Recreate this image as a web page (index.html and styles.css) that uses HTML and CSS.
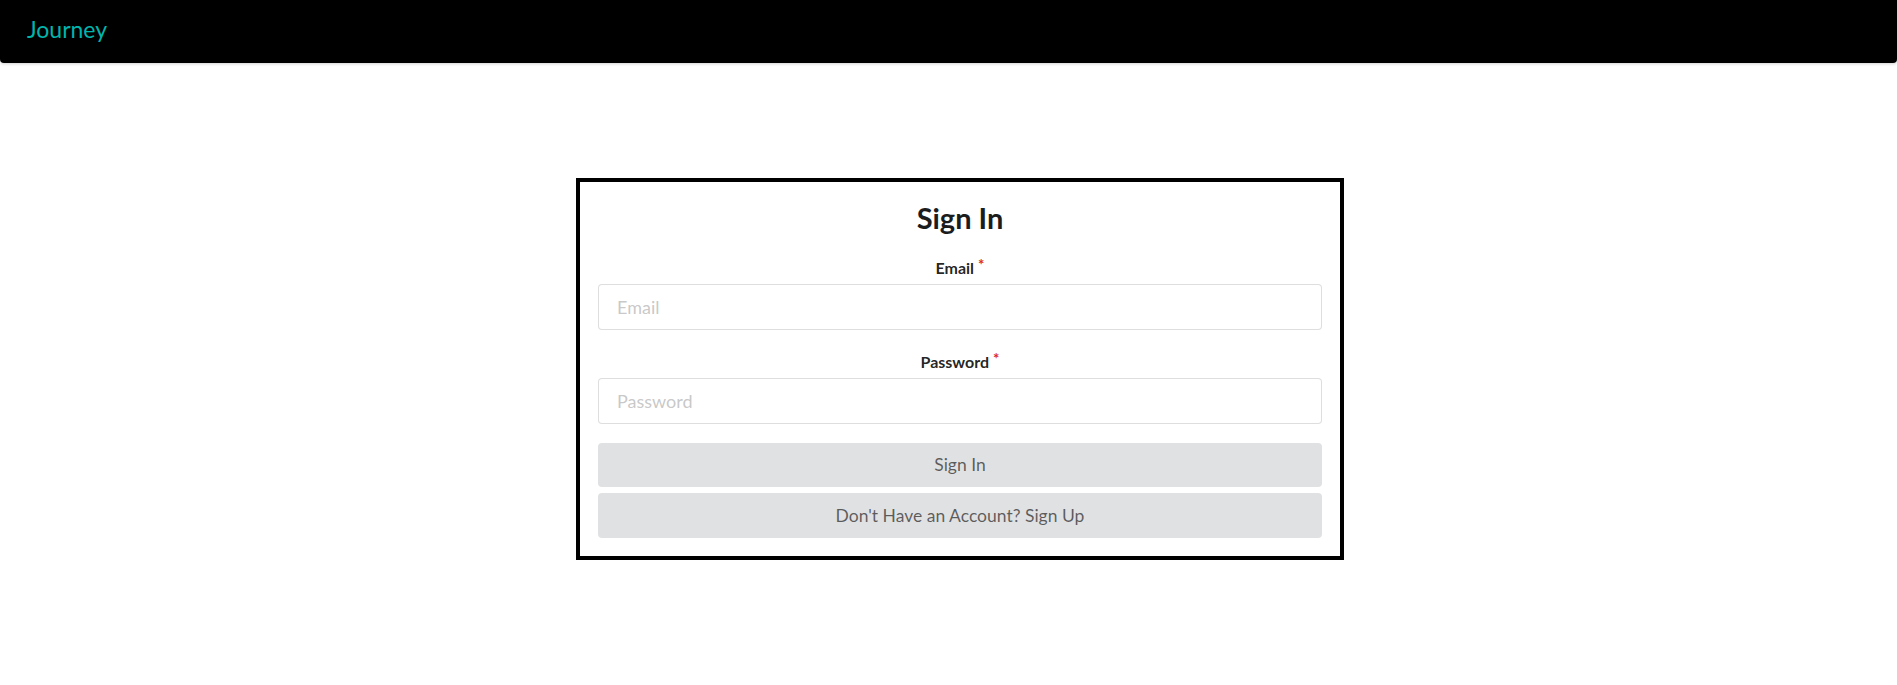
FILE: index.html
```html
<!DOCTYPE html>
<html lang="en">
<head>
<meta charset="utf-8">
<title>Journey</title>
<link rel="stylesheet" href="styles.css">
</head>
<body>
<header class="topbar">
  <a class="brand" href="#">Journey</a>
</header>
<main class="page">
  <form class="card">
    <h1 class="title">Sign In</h1>
    <div class="field">
      <label class="label" for="email">Email<span class="req">*</span></label>
      <input class="input" id="email" type="email" placeholder="Email">
    </div>
    <div class="field">
      <label class="label" for="password">Password<span class="req">*</span></label>
      <input class="input" id="password" type="password" placeholder="Password">
    </div>
    <div class="actions">
      <button class="btn" type="button">Sign In</button>
      <button class="btn" type="button">Don't Have an Account? Sign Up</button>
    </div>
  </form>
</main>
</body>
</html>
```
FILE: styles.css
```css
* { box-sizing: border-box; }
html, body { margin: 0; padding: 0; background: #fff; }
body { font-family: Lato, "Open Sans", "Liberation Sans", sans-serif; color: rgba(0,0,0,.87); }

.topbar {
  height: 63px;
  background: #000;
  border-radius: 0 0 4px 4px;
  box-shadow: 0 1px 3px 0 rgba(34,36,38,.2);
  display: flex;
  align-items: flex-start;
  padding: 16px 0 0 27px;
}
.brand {
  font-size: 23px;
  line-height: 1.2;
  color: #00b5ad;
  text-decoration: none;
}

.page {
  display: flex;
  justify-content: center;
  padding: 115px 0 0 23px;
}
.card {
  width: 768px;
  border: 4px solid #000;
  padding: 19px 18px 18px;
  display: flex;
  flex-direction: column;
}
.title {
  margin: 0;
  font-size: 29px;
  font-weight: 700;
  line-height: 1.2;
  text-align: center;
  color: #1b1c1d;
}
.field {
  display: flex;
  flex-direction: column;
  margin-top: 22px;
}
.label {
  font-size: 16px;
  font-weight: 700;
  line-height: 1.2;
  text-align: center;
  color: rgba(0,0,0,.87);
  margin-bottom: 7px;
}
.req {
  color: #db2828;
  font-size: 15px;
  margin-left: 4px;
  position: relative;
  top: -4px;
}
.input {
  height: 46px;
  width: 100%;
  border: 1px solid rgba(34,36,38,.15);
  border-radius: 4px;
  padding: 0 18px;
  font-family: inherit;
  font-size: 18px;
  color: rgba(0,0,0,.87);
  background: #fff;
  outline: none;
}
.input::placeholder { color: rgba(191,191,191,.87); }
.actions {
  display: flex;
  flex-direction: column;
  gap: 6px;
  margin-top: 19px;
}
.btn {
  height: 44px;
  width: 100%;
  border: 0;
  border-radius: 4px;
  background: #e0e1e2;
  color: rgba(0,0,0,.6);
  font-family: inherit;
  font-size: 17.5px;
  line-height: 1;
  cursor: pointer;
}
.btn + .btn { height: 45px; }
```
